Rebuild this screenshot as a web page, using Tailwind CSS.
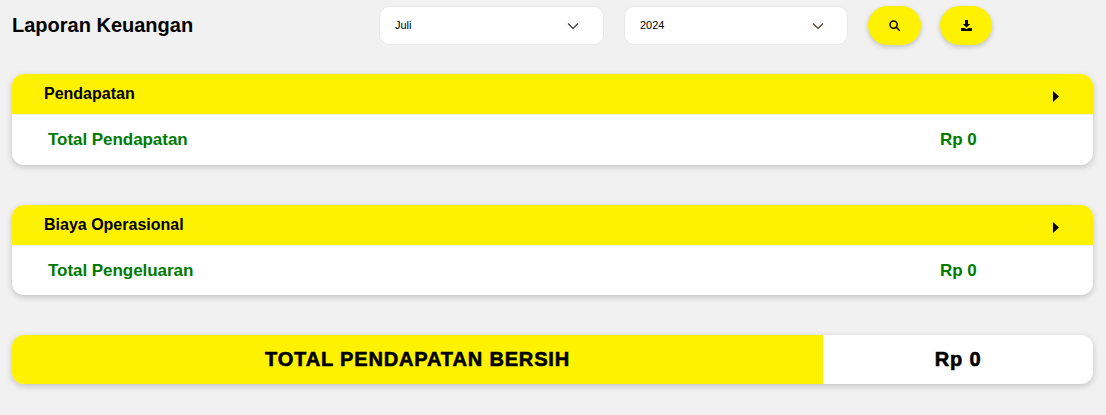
<!DOCTYPE html>
<html lang="en">
<head>
    <meta charset="UTF-8">
    <meta name="viewport" content="width=device-width, initial-scale=1.0">
    <title>Laporan Keuangan</title>
    <script src="https://cdn.jsdelivr.net/npm/@tailwindcss/browser@4"></script>
</head>
<body class="min-h-screen bg-[#f1f1f1] font-['Liberation_Sans',Arial,sans-serif] overflow-hidden">
    <div class="pl-3 pr-[13px] pt-1.5">
        <!-- Filter bar -->
        <div class="flex items-center h-[39px]">
            <h1 class="w-[367px] text-xl font-bold text-black -mt-0.5">Laporan Keuangan</h1>
            <div class="flex items-center justify-between w-[225px] h-[39px] mr-5 pl-[15px] pr-6 bg-white border border-[#e8e8e8] rounded-[10px] text-[11px] text-black">
                <span>Juli</span>
                <svg class="w-3 h-3 text-[#333]" viewBox="0 0 12 12" fill="none" stroke="currentColor" stroke-width="1.1"><path d="M1 3.500l5 5 5-5"/></svg>
            </div>
            <div class="flex items-center justify-between w-[224px] h-[39px] mr-5 pl-[15px] pr-[23px] bg-white border border-[#e8e8e8] rounded-[10px] text-[11px] text-black">
                <span>2024</span>
                <svg class="w-3 h-3 text-[#4a3a20]" viewBox="0 0 12 12" fill="none" stroke="currentColor" stroke-width="1.1"><path d="M1 3.500l5 5 5-5"/></svg>
            </div>
            <button class="flex items-center justify-center w-[53px] h-[39px] mr-[19px] bg-[#fff200] rounded-[20px] shadow-[0_2px_5px_rgba(0,0,0,0.2)]">
                <svg class="w-[11px] h-[11px]" viewBox="0 0 11 11" fill="none" stroke="black" stroke-width="1.500"><circle cx="4.600" cy="4.600" r="3.600"/><path d="M7.300 7.300l3 3" stroke-linecap="round"/></svg>
            </button>
            <button class="flex items-center justify-center w-[52px] h-[39px] bg-[#fff200] rounded-[20px] shadow-[0_2px_5px_rgba(0,0,0,0.2)]">
                <svg class="w-[11px] h-[11px]" viewBox="0 0 11 11" fill="black"><path d="M4 0h3v4h2.200L5.500 7.600 1.800 4H4z"/><path d="M0 8h3.500l2 1.200L7.500 8H11v3H0z"/></svg>
            </button>
        </div>

        <!-- Pendapatan -->
        <section class="mt-[29px] h-[91px] bg-white rounded-xl overflow-hidden shadow-[0_2px_6px_rgba(0,0,0,0.2)]">
            <div class="flex items-center justify-between h-[41px] pl-8 pr-[34px] bg-[#fff200] border-b border-[#eeeeee]">
                <span class="text-base font-bold text-black leading-none">Pendapatan</span>
                <svg class="w-1.5 h-[11px] mt-1" viewBox="0 0 6 11" fill="black"><path d="M0 0l6 5.500-6 5.500z"/></svg>
            </div>
            <div class="flex items-center h-[50px] pl-9 text-[#007a00] text-[17px] font-bold tracking-[-0.05px]">
                <span class="w-[892px]">Total Pendapatan</span>
                <span>Rp 0</span>
            </div>
        </section>

        <!-- Biaya Operasional -->
        <section class="mt-10 h-[90px] bg-white rounded-xl overflow-hidden shadow-[0_2px_6px_rgba(0,0,0,0.2)]">
            <div class="flex items-center justify-between h-[41px] pl-8 pr-[34px] bg-[#fff200] border-b border-[#eeeeee]">
                <span class="text-base font-bold text-black leading-none">Biaya Operasional</span>
                <svg class="w-1.5 h-[11px] mt-1" viewBox="0 0 6 11" fill="black"><path d="M0 0l6 5.500-6 5.500z"/></svg>
            </div>
            <div class="flex items-center h-[49px] pl-9 text-[#007a00] text-[17px] font-bold tracking-[-0.05px]">
                <span class="w-[892px]">Total Pengeluaran</span>
                <span>Rp 0</span>
            </div>
        </section>

        <!-- Total -->
        <section class="flex mt-10 h-[49px] bg-white rounded-xl overflow-hidden shadow-[0_2px_6px_rgba(0,0,0,0.2)] text-xl text-black font-bold tracking-[0.85px] [-webkit-text-stroke:0.6px_black]">
            <div class="flex items-center justify-center w-[811px] pb-0.5 bg-[#fff200]">TOTAL PENDAPATAN BERSIH</div>
            <div class="flex items-center justify-center flex-1 pb-0.5">Rp 0</div>
        </section>
    </div>
</body>
</html>
